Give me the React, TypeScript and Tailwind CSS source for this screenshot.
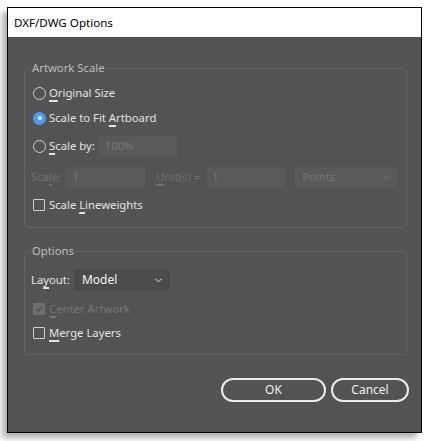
import { ChevronDown } from "lucide-react"

const U = ({ children }: { children: string }) => (
  <span className="underline decoration-[2px] underline-offset-[3px]">{children}</span>
)

const Radio = ({ checked }: { checked?: boolean }) =>
  checked ? (
    <span className="flex size-[13px] items-center justify-center rounded-full bg-[#4b9cf0]">
      <span className="size-[4px] rounded-full bg-[#f2f2f2]" />
    </span>
  ) : (
    <span className="size-[13px] rounded-full border-[1.5px] border-[#cfcfcf]" />
  )

const Checkbox = ({ checked, disabled }: { checked?: boolean; disabled?: boolean }) => (
  <span
    className={
      disabled
        ? "flex size-[12px] items-center justify-center rounded-[1px] bg-[#6e6e6e]"
        : "size-[12px] rounded-[1px] border border-[#cfcfcf]"
    }
  >
    {checked && (
      <svg viewBox="0 0 12 12" className="size-[10px]">
        <path d="M2.5 6.2 5 8.6 9.6 3.4" fill="none" stroke="#535353" strokeWidth="2" />
      </svg>
    )}
  </span>
)

const Field = ({ value, w }: { value: string; w: string }) => (
  <div className={`flex h-[21px] items-center rounded-[2px] bg-[#595959] px-[6px] text-[#767676] ${w}`}>
    {value}
  </div>
)

export default function App() {
  return (
    <div
      className="h-[441px] w-[430px] overflow-hidden bg-white pt-[7px] pl-[7px] text-[11.3px]"
      style={{ fontFamily: '"Noto Sans", "Open Sans", sans-serif' }}
    >
      <div className="flex h-[426px] w-[415px] flex-col border border-black bg-[#535353] shadow-[-5px_5px_6px_rgba(0,0,0,0.3)]">
        <div className="flex h-[29px] items-center bg-white pl-[6px] text-[11.6px] text-black">
          DXF/DWG Options
        </div>

        <div className="flex flex-1 flex-col pt-[23px] pr-[14px] pl-[16px] text-[#e2e2e2]">
          <fieldset className="h-[168px] rounded-[4px] border border-[#626262] pl-[8px]">
            <legend className="-ml-[2px] px-[1px] leading-[16px] text-[#bdbdbd]">Artwork Scale</legend>
            <div className="mt-[5px] flex h-[24px] items-center gap-[3px]">
              <Radio />
              <span>
                <U>O</U>riginal Size
              </span>
            </div>
            <div className="flex h-[26px] items-center gap-[3px]">
              <Radio checked />
              <span>
                Scale to Fit <U>A</U>rtboard
              </span>
            </div>
            <div className="flex h-[30px] items-center">
              <Radio />
              <span className="ml-[3px]">
                <U>S</U>cale by:
              </span>
              <div className="ml-[4px]">
                <Field value="100%" w="w-[79px] h-[20px]" />
              </div>
            </div>
            <div className="-ml-[2px] flex h-[32px] items-center text-[#6f6f6f]">
              <span>
                Sca<U>l</U>e:
              </span>
              <div className="ml-[5px]">
                <Field value="1" w="w-[79px]" />
              </div>
              <span className="ml-[11px]">
                <U>U</U>nit(s) =
              </span>
              <div className="ml-[6px]">
                <Field value="1" w="w-[79px]" />
              </div>
              <div className="ml-[10px] flex h-[21px] w-[102px] items-center justify-between rounded-[2px] bg-[#595959] pr-[5px] pl-[7px] text-[#767676]">
                Points
                <ChevronDown className="size-[11px]" strokeWidth={2} />
              </div>
            </div>
            <div className="flex h-[24px] items-center gap-[4px]">
              <Checkbox />
              <span>
                Scale <U>L</U>ineweights
              </span>
            </div>
          </fieldset>

          <fieldset className="mt-[15px] h-[112px] rounded-[4px] border border-[#626262] pl-[8px]">
            <legend className="-ml-[2px] px-[1px] leading-[16px] text-[#bdbdbd]">Options</legend>
            <div className="-ml-[2px] mt-[9px] flex h-[24px] items-center">
              <span>
                La<U>y</U>out:
              </span>
              <div className="ml-[5px] flex h-[20px] w-[94px] items-center justify-between rounded-[2px] border border-[#444] bg-[#4b4b4b] pr-[4px] pl-[6px] text-[12px] text-[#f4f4f4]">
                Model
                <ChevronDown className="size-[11px]" strokeWidth={2} />
              </div>
            </div>
            <div className="flex h-[34px] items-center gap-[4px] text-[#737373]">
              <Checkbox checked disabled />
              <span>
                <U>C</U>enter Artwork
              </span>
            </div>
            <div className="flex h-[14px] items-center gap-[4px]">
              <Checkbox />
              <span>
                <U>M</U>erge Layers
              </span>
            </div>
          </fieldset>

          <div className="mt-[23px] flex justify-end gap-[5px] text-[12px] text-[#f0f0f0]">
            <button className="flex h-[24px] w-[105px] items-center justify-center rounded-full border-2 border-[#ececec]">
              OK
            </button>
            <button className="mr-[-2px] flex h-[24px] w-[78px] items-center justify-center rounded-full border-2 border-[#ececec]">
              Cancel
            </button>
          </div>
        </div>
      </div>
    </div>
  )
}
